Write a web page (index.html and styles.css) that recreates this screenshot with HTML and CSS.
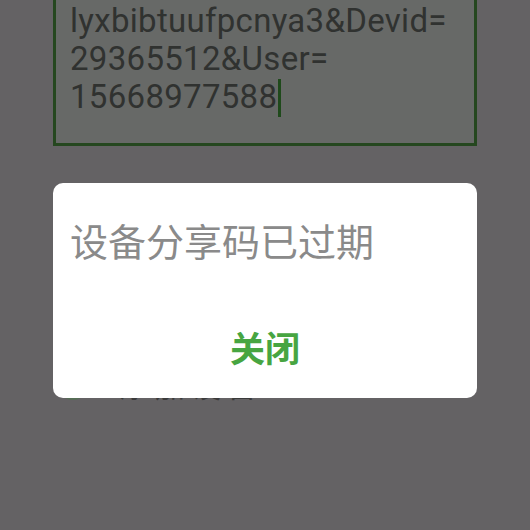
FILE: index.html
```html
<!DOCTYPE html>
<html lang="zh">
<head>
<meta charset="utf-8">
<link rel="stylesheet" href="styles.css">
</head>
<body>
<div class="page">
  <div class="field">
    <div class="line">lyxbibtuufpcnya3&amp;Devid=</div>
    <div class="line">29365512&amp;User=</div>
    <div class="line">15668977588<span class="cursor"></span></div>
  </div>
  <div class="agree">
    <span class="radio"></span>
    <span class="agree-text">添加设备</span>
  </div>
</div>
<div class="dialog">
  <div class="dialog-title">设备分享码已过期</div>
  <div class="dialog-btn">关闭</div>
</div>
</body>
</html>
```
FILE: styles.css
```css
html, body {
  margin: 0;
  padding: 0;
}
body {
  width: 530px;
  height: 530px;
  overflow: hidden;
  position: relative;
  background: #646264;
  font-family: Roboto, "Noto Sans CJK SC", sans-serif;
}
.page {
  padding: 0 53px;
}
.field {
  margin-top: -16px;
  border: 3px solid #25471f;
  background: #676967;
  padding: 15px 14px 26px;
  font-size: 33px;
  line-height: 38px;
  letter-spacing: 0.3px;
  color: #303230;
}
.line {
  white-space: nowrap;
}
.cursor {
  display: inline-block;
  width: 3px;
  height: 38px;
  background: #1f4a1b;
  vertical-align: -9px;
  margin-left: 1px;
}
.agree {
  margin-top: 222px;
  display: flex;
  align-items: flex-end;
  gap: 30px;
  padding-left: 4px;
}
.radio {
  width: 28px;
  height: 28px;
  margin-bottom: -2px;
  border: 2px solid #566e56;
  border-radius: 50%;
}
.agree-text {
  font-size: 30px;
  line-height: 28px;
  color: #3a3a3a;
  font-family: "Noto Sans CJK SC", sans-serif;
  letter-spacing: 6px;
}
.dialog {
  position: absolute;
  left: 53px;
  top: 183px;
  width: 424px;
  height: 215px;
  background: #ffffff;
  border-radius: 10px;
  display: flex;
  flex-direction: column;
  box-sizing: border-box;
  padding: 37px 17px 0;
}
.dialog-title {
  font-family: "Noto Sans CJK SC", sans-serif;
  font-size: 38px;
  line-height: 40px;
  color: #8a8a8a;
  white-space: nowrap;
}
.dialog-btn {
  margin-top: 67px;
  text-align: center;
  font-family: "Noto Sans CJK SC", sans-serif;
  font-weight: 700;
  font-size: 35px;
  line-height: 40px;
  color: #47a541;
}
```
